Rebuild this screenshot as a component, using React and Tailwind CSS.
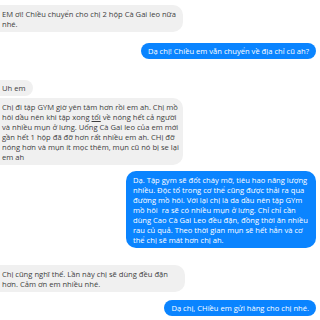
const messages = [
  { side: 'left', mt: 'mt-[5px]', w: 'w-[193px]', lines: ['EM ơi! Chiều chuyển cho chị 2 hộp Cà Gai leo nữa', 'nhé.'] },
  { side: 'right', mt: 'mt-[11px]', w: '', lines: ['Dạ chị! Chiều em vẫn chuyển về địa chỉ cũ ah?'] },
  { side: 'left', mt: 'mt-[21px]', w: '', lines: ['Uh em'] },
  {
    side: 'left',
    mt: 'mt-[2px]',
    w: 'w-[193px]',
    lines: [
      'Chị đi tập GYM giờ yên tâm hơn rồi em ah. Chị mồ',
      'UNDERLINE',
      'và nhiều mụn ở lưng. Uống Cà Gai leo của em mới',
      'gần hết 1 hộp đã đỡ hơn rất nhiều em ah. CHị đỡ',
      'nóng hơn và mụn ít mọc thêm, mụn cũ nó bị se lại',
      'em ah',
    ],
  },
  {
    side: 'right',
    mt: 'mt-[6px]',
    w: 'w-[190px]',
    lines: [
      'Dạ. Tập gym sẽ đốt cháy mỡ, tiêu hao năng lượng',
      'nhiều. Độc tố trong cơ thể cũng được thải ra qua',
      'đường mồ hôi. Với lại chị là da dầu nên tập GYm',
      'mồ hôi  ra sẽ có nhiều mụn ở lưng. Chỉ chỉ cần',
      'dùng Cao Cà Gai Leo đều đặn, đồng thời ăn nhiều',
      'rau củ quả. Theo thời gian mụn sẽ hết hẳn và cơ',
      'thể chị sẽ mát hơn chị ah.',
    ],
  },
  { side: 'left', mt: 'mt-[17px]', w: 'w-[195px]', lines: ['Chị cũng nghĩ thế. Lần này chị sẽ dùng đều đặn', 'hơn. Cảm ơn em nhiều nhé.'] },
  { side: 'right', mt: 'mt-[8px]', w: '', lines: ['Dạ chị, CHiều em gửi hàng cho chị nhé.'] },
];

const Line = ({ text }) => {
  if (text === 'UNDERLINE') {
    return (
      <div className="whitespace-pre">
        hôi dầu nên khi tập xong <span className="underline">tối</span> về nóng hết cả người
      </div>
    );
  }
  return <div className="whitespace-pre">{text}</div>;
};

const Bubble = ({ msg }) => {
  const left = msg.side === 'left';
  const multi = msg.lines.length > 1;
  return (
    <div className={`flex ${left ? 'justify-start -ml-[10px]' : 'justify-end pr-[4px]'} ${msg.mt}`}>
      <div
        className={`${msg.w} min-w-0 ${multi ? 'rounded-[10px] py-[3.5px]' : 'rounded-full py-[3px]'} ${
          left ? 'bg-[#f0f0f0] text-[#3d3d3d] pl-[12px] pr-[8px]' : 'bg-[#0a84ff] text-white px-[7px]'
        }`}
      >
        {msg.lines.map((l, i) => (
          <Line key={i} text={l} />
        ))}
      </div>
    </div>
  );
};

export default function App() {
  return (
    <div
      className="w-[320px] h-[320px] overflow-hidden bg-white text-[7.6px] leading-[10px]"
      style={{ fontFamily: '"Open Sans", "Noto Sans", sans-serif' }}
    >
      {messages.map((m, i) => (
        <Bubble key={i} msg={m} />
      ))}
    </div>
  );
}
